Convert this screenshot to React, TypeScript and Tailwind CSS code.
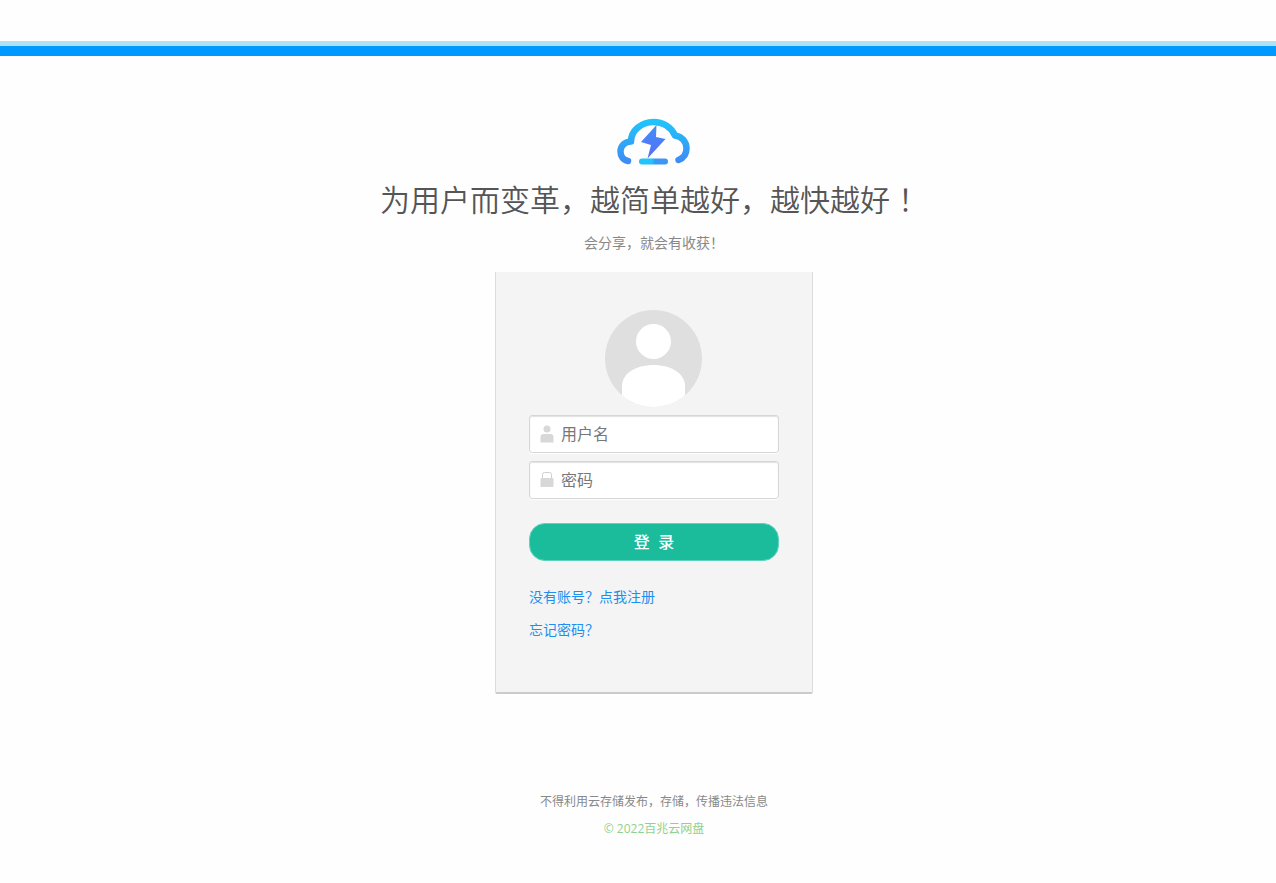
import type { InputHTMLAttributes, ReactNode } from 'react'

interface FieldProps extends InputHTMLAttributes<HTMLInputElement> {
  label: string
  icon: ReactNode
}

function Logo() {
  return (
    <svg width="74" height="48" viewBox="0 0 74 48" fill="none" aria-hidden="true">
      <defs>
        <linearGradient id="cloud" x1="0" y1="0" x2="0" y2="1">
          <stop offset="0" stopColor="#1fc4fb" />
          <stop offset="1" stopColor="#3d8df5" />
        </linearGradient>
        <linearGradient id="bolt" x1="0" y1="0" x2="0" y2="1">
          <stop offset="0" stopColor="#3f8ff8" />
          <stop offset="1" stopColor="#5a6df6" />
        </linearGradient>
        <linearGradient id="dash" x1="0" y1="0" x2="1" y2="0">
          <stop offset="0.45" stopColor="#1fc4fb" />
          <stop offset="0.55" stopColor="#3b97f7" />
        </linearGradient>
      </defs>
      <path
        d="M11 43C6 42 3.500 38 3.500 33.500C3.500 28 8 23.500 14 23.500C14 13 24 4 36.500 4C46 4 54 9 58 17.500C65 18.500 69.500 24 69.500 30.500C69.500 36 66.500 40 61.500 42"
        stroke="url(#cloud)"
        strokeWidth="6.500"
        strokeLinecap="round"
        strokeLinejoin="round"
      />
      <path d="M39.500 7L24 24L34 27L30.500 40.500L48.500 21L39 19Z" fill="url(#bolt)" />
      <rect x="22" y="40.500" width="29" height="6" rx="3" fill="url(#dash)" />
    </svg>
  )
}

function Avatar() {
  return (
    <svg width="98" height="98" viewBox="0 0 98 98" aria-hidden="true">
      <defs>
        <clipPath id="face">
          <circle cx="48.500" cy="48.500" r="48.500" />
        </clipPath>
      </defs>
      <g clipPath="url(#face)">
        <rect width="98" height="98" fill="#dfdfdf" />
        <circle cx="48.500" cy="31.500" r="17.500" fill="#fff" />
        <path
          d="M17 98V76C17 64 30 55 48.500 55S80 64 80 76V98Z"
          fill="#fff"
        />
      </g>
    </svg>
  )
}

function UserIcon() {
  return (
    <svg className="shrink-0" width="14" height="18" viewBox="0 0 14 18" fill="#d8d8d8" aria-hidden="true">
      <circle cx="7" cy="4" r="3.500" />
      <path d="M0.500 12Q0.500 9 3.500 9H10.500Q13.500 9 13.500 12V17.500H0.500Z" />
    </svg>
  )
}

function LockIcon() {
  return (
    <svg className="shrink-0" width="14" height="18" viewBox="0 0 14 18" fill="none" aria-hidden="true">
      <path d="M2.500 9V3.500Q2.500 1.500 4.500 1.500H9.500Q11.500 1.500 11.500 3.500V9" stroke="#cfcfcf" />
      <rect x="0.500" y="7" width="13" height="9" rx="1" fill="#d8d8d8" />
    </svg>
  )
}

function Field({ label, icon, ...props }: FieldProps) {
  return (
    <label className="flex h-[38px] items-center gap-[7px] rounded-[3px] border border-[#d6d6d6] bg-white px-2.5 shadow-[inset_0_1px_1px_#e2e2e2,0_1px_1px_#ffffff]">
      {icon}
      <input
        {...props}
        aria-label={label}
        placeholder={label}
        className="w-full min-w-0 bg-transparent text-base leading-6 text-[#555] outline-none placeholder:text-[#777]"
      />
    </label>
  )
}

export default function App() {
  return (
    <div className="min-h-screen bg-[#fefefe] pt-[41px] font-['Open_Sans','Noto_Sans_CJK_SC',sans-serif]">
      <header className="h-[15px] border-t-[5px] border-[#ade2f3] bg-[#0099ff]" />

      <main className="flex flex-col items-center pt-[62px] pl-8 text-center">
        <Logo />
        <h1 className="mt-[11px] text-[30px] leading-[46px] font-[350] text-[#555]">
          为用户而变革，越简单越好，越快越好 ！
        </h1>
        <p className="mt-2 text-sm leading-6 text-[#888]">会分享，就会有收获！</p>

        <section className="mt-[17px] w-[318px] max-w-full rounded-b-xs border-x border-b-2 border-x-[#dcdcdc] border-b-[#cbcbcb] bg-[#f4f4f4] px-[33px] pt-[38px] pb-[50px]">
          <div className="flex justify-center">
            <Avatar />
          </div>
          <form className="mt-[7px] flex flex-col gap-2" onSubmit={(e) => e.preventDefault()}>
            <Field label="用户名" icon={<UserIcon />} type="text" name="username" />
            <Field label="密码" icon={<LockIcon />} type="password" name="password" />
            <button
              type="submit"
              className="mt-4 h-[38px] rounded-2xl border border-[#5fd3bb] bg-[#1abc9c] text-base font-medium text-white"
            >
              登&nbsp; 录
            </button>
          </form>
          <div className="mt-6 flex flex-col items-start gap-[9px] text-sm leading-6 text-[#1e8fef]">
            <a href="#register">没有账号？点我注册</a>
            <a href="#forgot">忘记密码？</a>
          </div>
        </section>
      </main>

      <footer className="mt-24 flex flex-col items-center gap-[3px] pb-8 pl-8 text-xs leading-6">
        <p className="text-[#888]">不得利用云存储发布，存储，传播违法信息</p>
        <p className="text-[#8fd18f]">© 2022百兆云网盘</p>
      </footer>
    </div>
  )
}
